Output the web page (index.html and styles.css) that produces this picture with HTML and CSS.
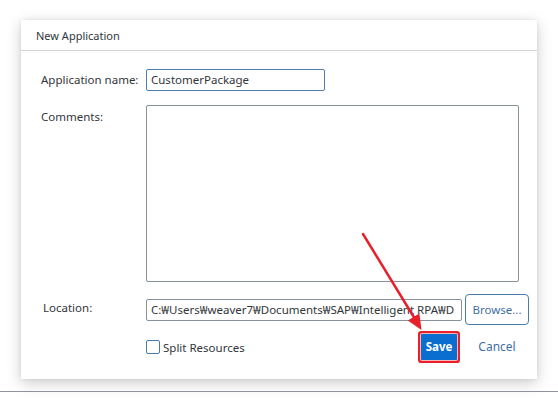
FILE: index.html
```html
<!DOCTYPE html>
<html>
<head>
<meta charset="utf-8">
<link rel="stylesheet" href="styles.css">
</head>
<body>
<div class="page">
  <div class="dialog">
    <div class="dialog-header">New Application</div>
    <div class="dialog-body">
      <label class="lbl lbl-name">Application name:</label>
      <div class="field"><div class="input input-name">CustomerPackage</div></div>
      <label class="lbl lbl-comments">Comments:</label>
      <div class="field"><div class="textarea"></div></div>
      <label class="lbl lbl-location">Location:</label>
      <div class="field loc-row">
        <div class="input input-loc">C:₩Users₩weaver7₩Documents₩SAP₩Intelligent RPA₩D</div>
        <div class="btn btn-browse">Browse...</div>
      </div>
      <div></div>
      <div class="field foot-row">
        <div class="check"><span class="box"></span><span>Split Resources</span></div>
        <div class="actions">
          <div class="btn btn-save">Save</div>
          <div class="btn btn-cancel">Cancel</div>
        </div>
      </div>
    </div>
  </div>
  <div class="rule"></div>
</div>
<svg class="arrow" width="558" height="400" viewBox="0 0 558 400">
  <line x1="363" y1="234" x2="415" y2="319" stroke="#e8202a" stroke-width="2.5" stroke-linecap="round"/>
  <polygon points="421.5,330 407.8,320.6 419.4,313.5" fill="#e8202a"/>
</svg>
</body>
</html>
```
FILE: styles.css
```css
html, body {
  margin: 0;
  padding: 0;
  background: #ffffff;
}
body {
  font-family: "Noto Sans", "Open Sans", sans-serif;
  color: #32363a;
  width: 558px;
  height: 400px;
  overflow: hidden;
  position: relative;
}
.page {
  padding-top: 20px;
}
.dialog {
  margin-left: 21px;
  width: 516px;
  height: 359px;
  background: #fff;
  box-shadow: 0 4px 14px rgba(0, 0, 0, 0.2), 0 0 4px rgba(0, 0, 0, 0.08);
  box-sizing: border-box;
}
.dialog-header {
  height: 31px;
  box-sizing: border-box;
  border-bottom: 1px solid #d6d6d6;
  padding-left: 15px;
  font-size: 11px;
  line-height: 31px;
  color: #32363a;
}
.dialog-body {
  display: grid;
  grid-template-columns: 105px 1fr;
  row-gap: 14px;
  padding: 18px 8px 0 20px;
  font-size: 11.5px;
}
.lbl {
  line-height: 22px;
}
.lbl-comments {
  line-height: 14px;
  padding-top: 5px;
}
.lbl-location {
  line-height: 14px;
  margin-top: 5px;
  margin-left: 2px;
}
.input {
  height: 22px;
  box-sizing: border-box;
  border: 1px solid #89919a;
  border-radius: 2px;
  padding: 0 4px;
  line-height: 20px;
  white-space: nowrap;
  overflow: hidden;
  text-overflow: clip;
  font-size: 11.5px;
}
.input-name {
  width: 179px;
  border-color: #4f7eae;
}
.textarea {
  width: 373px;
  height: 177px;
  box-sizing: border-box;
  border: 1px solid #89919a;
  border-radius: 2px;
}
.loc-row {
  display: flex;
  align-items: flex-start;
  gap: 3px;
  margin-top: -2px;
}
.input-loc {
  width: 316px;
  margin-top: 5px;
  padding-right: 0;
}
.btn {
  box-sizing: border-box;
  font-size: 12px;
  text-align: center;
}
.btn-browse {
  width: 64px;
  height: 31px;
  line-height: 29px;
  border: 1px solid #4a7aae;
  border-radius: 4px;
  color: #3f6fa6;
  font-size: 11.5px;
}
.foot-row {
  display: flex;
  align-items: center;
  justify-content: space-between;
  margin-top: -8px;
}
.check {
  display: flex;
  align-items: center;
  gap: 3px;
}
.box {
  width: 14px;
  height: 14px;
  box-sizing: border-box;
  border: 1px solid #4a7aae;
  border-radius: 2px;
  background: #fff;
}
.actions {
  display: flex;
  align-items: center;
  gap: 5px;
}
.btn-save {
  width: 36px;
  height: 26px;
  line-height: 26px;
  margin: 3px;
  background: #0a6ed1;
  color: #fff;
  font-weight: bold;
  font-size: 11.5px;
  border-radius: 1px;
  box-shadow: 0 0 0 1px #f7b8bb, 0 0 0 3px #e8202a;
}
.btn-cancel {
  width: 64px;
  height: 26px;
  line-height: 26px;
  color: #3f6fa6;
}
.rule {
  margin-top: 12px;
  height: 1px;
  background: #8f949c;
}
.arrow {
  position: absolute;
  left: 0;
  top: 0;
  pointer-events: none;
}
```
